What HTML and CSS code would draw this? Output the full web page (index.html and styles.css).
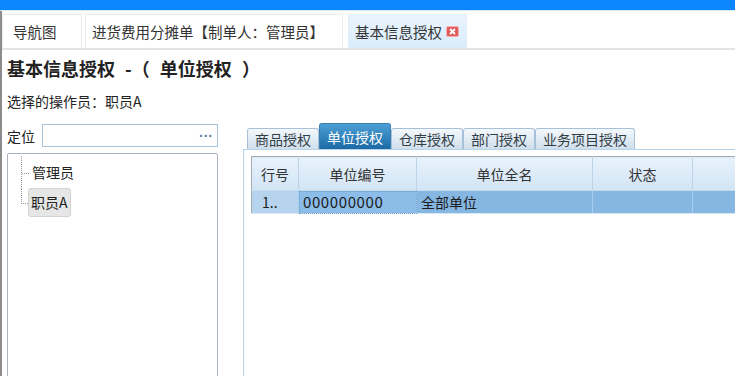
FILE: index.html
```html
<!DOCTYPE html>
<html lang="zh-CN">
<head>
    <meta charset="UTF-8">
    <title>基本信息授权</title>
    <link rel="stylesheet" href="styles.css">
</head>
<body>
    <div class="window">
        <div class="titlebar"></div>
        <div class="frame">
            <div class="doc-tabs">
                <div class="doc-tab first">导航图</div>
                <div class="doc-tab wide">进货费用分摊单【制单人：管理员】</div>
                <div class="doc-tab active">基本信息授权
                    <svg class="close" width="13" height="11" viewBox="0 0 13 11">
                        <rect x="0.5" y="0.5" width="12" height="10" rx="1.5" fill="#e25b5b" stroke="#f2b0b0"/>
                        <path d="M4 3 L9 8 M9 3 L4 8" stroke="#fff" stroke-width="1.8"/>
                    </svg>
                </div>
            </div>

            <div class="page">
                <h1>基本信息授权 -（ 单位授权 ）</h1>
                <div class="operator">选择的操作员：职员A</div>

                <div class="main">
                    <div class="left">
                        <div class="locate">
                            <span class="locate-label">定位</span>
                            <div class="search"><span class="more">···</span></div>
                        </div>
                        <div class="tree">
                            <div class="node">
                                <span class="twig"></span>
                                <span class="node-label">管理员</span>
                            </div>
                            <div class="node">
                                <span class="twig"></span>
                                <span class="node-label selected">职员A</span>
                            </div>
                        </div>
                    </div>

                    <div class="right">
                        <div class="tabs">
                            <div class="tab">商品授权</div>
                            <div class="tab active">单位授权</div>
                            <div class="tab">仓库授权</div>
                            <div class="tab">部门授权</div>
                            <div class="tab">业务项目授权</div>
                        </div>
                        <div class="tab-panel">
                            <table class="grid">
                                <colgroup>
                                    <col class="c-no">
                                    <col class="c-code">
                                    <col class="c-name">
                                    <col class="c-state">
                                    <col>
                                </colgroup>
                                <thead>
                                    <tr>
                                        <th>行号</th>
                                        <th>单位编号</th>
                                        <th>单位全名</th>
                                        <th>状态</th>
                                        <th></th>
                                    </tr>
                                </thead>
                                <tbody>
                                    <tr class="current">
                                        <td class="row-no">1..</td>
                                        <td class="focus">000000000</td>
                                        <td>全部单位</td>
                                        <td></td>
                                        <td></td>
                                    </tr>
                                </tbody>
                            </table>
                        </div>
                    </div>
                </div>
            </div>
        </div>
    </div>
</body>
</html>
```

FILE: styles.css
```css
html, body {
    margin: 0;
    padding: 0;
}
body {
    font-family: "Noto Sans CJK SC", "Noto Sans", sans-serif;
    font-size: 14px;
    color: #222;
    background: #fff;
    overflow: hidden;
}
.window {
    height: 376px;
    display: flex;
    flex-direction: column;
    overflow: hidden;
}
.titlebar {
    height: 10px;
    background: #0b86fd;
    border-bottom: 1px solid #d4e6f8;
    flex: none;
}
.frame {
    flex: 1;
    border-left: 2px solid #8c8c8c;
    display: flex;
    flex-direction: column;
    min-height: 0;
}

/* document tabs */
.doc-tabs {
    display: flex;
    align-items: stretch;
    height: 34px;
    padding-top: 3px;
    border-bottom: 2px solid #e4e4e4;
    flex: none;
}
.doc-tab {
    box-sizing: border-box;
    display: flex;
    align-items: center;
    font-size: 14.5px;
    color: #333;
    padding: 0 6px;
    border: 1px solid #ececec;
    border-bottom: none;
    background: #fff;
    margin-right: 3px;
}
.doc-tab.first {
    width: 80px;
    padding-left: 10px;
}
.doc-tab.wide {
    width: 258px;
    margin-right: 5px;
}
.doc-tab.active {
    width: 119px;
    background: linear-gradient(#eaf4fd, #d9ecfb);
    border-color: #e3eef8;
}
.close {
    margin-left: 4px;
}

/* page */
.page {
    padding: 0 0 0 5px;
    flex: 1;
    min-height: 0;
}
h1 {
    font-size: 18px;
    font-weight: bold;
    line-height: 24px;
    margin: 6px 0 0;
    color: #222;
    word-spacing: 6px;
}
.operator {
    font-size: 14px;
    line-height: 20px;
    margin-top: 11px;
}
.main {
    display: flex;
    gap: 25px;
    margin-top: 13px;
}

/* left column */
.left {
    width: 211px;
    flex: none;
}
.locate {
    display: flex;
    align-items: center;
    height: 23px;
}
.locate-label {
    width: 35px;
    flex: none;
}
.search {
    flex: 1;
    height: 21px;
    border: 1px solid #a9c4d8;
    display: flex;
    align-items: center;
    justify-content: flex-end;
    padding-right: 4px;
}
.more {
    font-family: "Liberation Sans", sans-serif;
    color: #5a7fa6;
    font-weight: bold;
    font-size: 14px;
}
.tree {
    margin-top: 6px;
    height: 240px;
    border: 1px solid #a8b3bd;
    border-radius: 2px;
    padding: 2px 0 0 13px;
}
.node {
    display: flex;
    align-items: center;
    height: 33px;
}
.node + .node {
    height: 27px;
}
.twig {
    align-self: stretch;
    width: 7px;
    border-left: 1px dotted #999;
}
.twig::before {
    content: "";
    display: block;
    height: 50%;
    border-bottom: 1px dotted #999;
}
.node:last-child .twig {
    border-left: none;
}
.node:last-child .twig::before {
    border-left: 1px dotted #999;
}
.node-label {
    padding: 2px 2px;
    line-height: 23px;
    border: 1px solid transparent;
    border-radius: 3px;
}
.node-label.selected {
    background: #e6e6e6;
    border-color: #d2d2d2;
}

/* right column */
.right {
    flex: 1;
    min-width: 0;
}
.tabs {
    display: flex;
    align-items: flex-end;
    height: 25px;
    padding-left: 4px;
}
.tab {
    height: 20px;
    line-height: 20px;
    padding: 0 7px;
    border: 1px solid #a7c2d8;
    border-bottom: none;
    border-radius: 3px 3px 0 0;
    background: linear-gradient(#f3f8fc, #cfdfec);
    color: #333d46;
}
.tab.active {
    height: 25px;
    line-height: 27px;
    background: linear-gradient(#4d9fd4, #1b6aa6);
    border-color: #3a7eb2;
    color: #fff;
}
.tab-panel {
    height: 240px;
    border-top: 1px solid #b5d3ea;
    border-left: 1px solid #b5d3ea;
    padding: 6px 0 0 7px;
    overflow: hidden;
}

/* grid */
.grid {
    border-collapse: collapse;
    width: 620px;
    table-layout: fixed;
    border: 1px solid #a3acb5;
}
.c-no { width: 47px; }
.c-code { width: 118px; }
.c-name { width: 176px; }
.c-state { width: 100px; }
.grid th {
    height: 33px;
    font-weight: normal;
    color: #333;
    background: linear-gradient(#e8f2fb, #d2e4f5);
    border-right: 1px solid #bcd3e8;
    border-bottom: 1px solid #c7dbee;
    padding: 0;
}
.grid td {
    height: 22px;
    padding: 0 4px;
    background: #86b6e2;
    border-right: 1px solid #a9cdef;
    border-bottom: 1px solid #d6e7f6;
    white-space: nowrap;
    overflow: hidden;
    color: #1c1c1c;
    line-height: 20px;
}
.grid td.row-no {
    background: #b7d4ee;
    padding-left: 10px;
}
.grid td.focus {
    background: #8cbce8;
    outline: 1px dotted #6c9fcd;
    outline-offset: -1px;
    font-size: 15px;
    letter-spacing: 0.6px;
}
```
